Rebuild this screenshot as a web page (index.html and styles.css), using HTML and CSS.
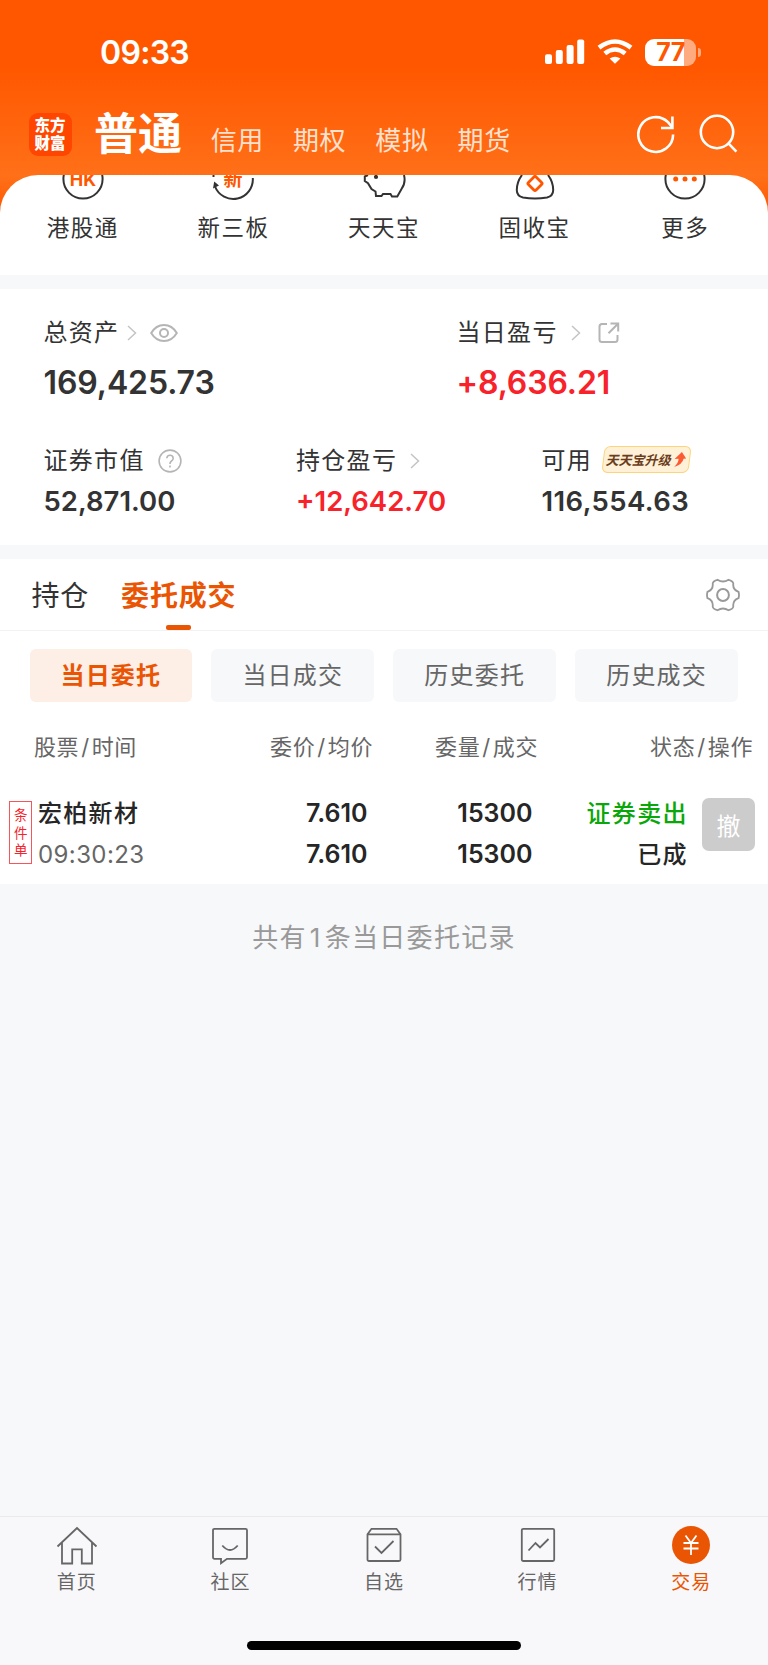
FILE: index.html
```html
<!DOCTYPE html>
<html lang="zh-CN">
<head>
  <meta charset="UTF-8">
  <meta name="viewport" content="width=device-width, initial-scale=1.0">
  <title>交易</title>
  <link rel="stylesheet" href="styles.css">
</head>
<body>
<header class="header">
  <div class="status-bar">
    <span class="time">09:33</span>
    <div class="status-icons">
      <svg class="signal" width="40" height="26" viewBox="0 0 40 26" fill="#fff">
        <rect x="0" y="15.3" width="7" height="9.7" rx="2"/>
        <rect x="10.8" y="11" width="7" height="14" rx="2"/>
        <rect x="21.6" y="6" width="7" height="19" rx="2"/>
        <rect x="32.2" y="0.5" width="7" height="24.5" rx="2"/>
      </svg>
      <svg class="wifi" width="36" height="26" viewBox="0 0 36 26" fill="none" stroke="#fff" stroke-width="4.6">
        <path d="M2 8.6Q18 -3.6 34 8.6"/>
        <path d="M7.8 14.5Q18 6.5 28.2 14.5"/>
        <path d="M18 24.8l-5.4-5.3q5.4-3.6 10.8 0z" fill="#fff" stroke="none"/>
      </svg>
      <div class="battery"><span class="battery-text">77</span></div>
      <i class="battery-tip"></i>
    </div>
  </div>
  <div class="nav-bar">
    <div class="logo">东方财富</div>
    <nav class="account-tabs">
      <a class="current">普通</a>
      <a>信用</a>
      <a>期权</a>
      <a>模拟</a>
      <a>期货</a>
    </nav>
    <div class="nav-actions">
      <svg width="40" height="42" viewBox="0 0 40 42" fill="none" stroke="#fff" stroke-width="2.6">
        <path d="M36.1 21.5A17.4 17.4 0 1 1 31 9.2L35 14"/>
        <path d="M35.4 3.5V15H24"/>
      </svg>
      <svg width="40" height="42" viewBox="0 0 40 42" fill="none" stroke="#fff" stroke-width="2.6">
        <circle cx="18" cy="19" r="16.2"/>
        <path d="M29.2 30.2l8.2 8.4"/>
      </svg>
    </div>
  </div>
</header>

<section class="shortcuts">
  <div class="shortcut">
    <svg width="44" height="26" viewBox="0 0 44 26">
      <circle cx="22" cy="4" r="19.6" fill="none" stroke="#333" stroke-width="2"/>
      <text x="22" y="10.5" class="icon-text icon-hk">HK</text>
    </svg>
    <span>港股通</span>
  </div>
  <div class="shortcut">
    <svg width="44" height="26" viewBox="0 0 44 26">
      <path d="M41.8 3A19.6 19.6 0 0 1 4 11.5M2.5 0v2" fill="none" stroke="#333" stroke-width="2"/>
      <path d="M2 13.5l1.2-7 4.8 4z" fill="#333"/>
      <text x="22" y="10.5" class="icon-text icon-new">新</text>
    </svg>
    <span>新三板</span>
  </div>
  <div class="shortcut">
    <svg width="44" height="26" viewBox="0 0 44 26" fill="none" stroke="#333" stroke-width="2">
      <path d="M6 0L2.8 1.5V6L6 8.2 9.5 14l4 2.5.5 4.5h5.5l1.5-2h7.5l1.5 2.5h5.3l4.2-7.5q4.5-6 2.5-14"/>
      <circle cx="14" cy="2" r="2.1" fill="#333" stroke="none"/>
    </svg>
    <span>天天宝</span>
  </div>
  <div class="shortcut">
    <svg width="44" height="26" viewBox="0 0 44 26" fill="none" stroke="#333" stroke-width="2">
      <path d="M9 0Q3.800 7 3.800 15Q3.800 21 10 22.500Q22 24.500 34 22.500Q40.200 21 40.200 15Q40.200 7 35 0"/>
      <rect x="16.6" y="3.1" width="10.8" height="10.8" rx="1.5" stroke="#ff5700" stroke-width="2.8" transform="rotate(45 22 8.5)"/>
    </svg>
    <span>固收宝</span>
  </div>
  <div class="shortcut">
    <svg width="44" height="26" viewBox="0 0 44 26">
      <circle cx="22" cy="4" r="19.6" fill="none" stroke="#333" stroke-width="2"/>
      <g fill="#ff5700"><circle cx="12.7" cy="4" r="2.5"/><circle cx="22" cy="4" r="2.5"/><circle cx="31.3" cy="4" r="2.5"/></g>
    </svg>
    <span>更多</span>
  </div>
</section>

<section class="assets">
  <div class="asset-row main-row">
    <div class="asset">
      <div class="asset-label">总资产
        <svg class="arrow" width="10" height="16" viewBox="0 0 10 16"><path d="M1 1l7.5 7L1 15"/></svg>
        <svg class="eye" width="28" height="20" viewBox="0 0 28 20"><path d="M1.200 10Q6 2 14 2t12.800 8Q22 18 14 18T1.200 10z"/><circle cx="14" cy="10" r="4"/></svg>
      </div>
      <div class="asset-value">169,425.73</div>
    </div>
    <div class="asset">
      <div class="asset-label">当日盈亏
        <svg class="arrow day" width="10" height="16" viewBox="0 0 10 16"><path d="M1 1l7.5 7L1 15"/></svg>
        <svg class="share" width="22" height="22" viewBox="0 0 22 22"><path d="M9 2H4Q1.500 2 1.500 4.500V17.500Q1.500 20 4 20H17Q19.500 20 19.500 17.500V13M12.500 1.500H20.200V9.500M20 1.700L10.500 11.200"/></svg>
      </div>
      <div class="asset-value up">+8,636.21</div>
    </div>
  </div>
  <div class="asset-row sub-row">
    <div class="asset">
      <div class="asset-label">证券市值
        <svg class="help" width="24" height="24" viewBox="0 0 24 24"><circle cx="12" cy="12" r="10.9"/><path d="M8.800 9.300Q9 6.200 12 6.200T15.200 9.200Q15.200 10.800 13.500 12T12 15M12 16.500v2"/></svg>
      </div>
      <div class="asset-value">52,871.00</div>
    </div>
    <div class="asset">
      <div class="asset-label">持仓盈亏
        <svg class="arrow day" width="10" height="16" viewBox="0 0 10 16"><path d="M1 1l7.5 7L1 15"/></svg>
      </div>
      <div class="asset-value up">+12,642.70</div>
    </div>
    <div class="asset">
      <div class="asset-label">可用
        <span class="upgrade"><b>天天宝升级</b>
          <svg width="12" height="15" viewBox="0 0 12 15"><path d="M7 0l5 6.500-2.500.3Q9 12.500 1 15q4-4 3.500-8.200L0.500 7z" fill="#fb5a33"/></svg>
        </span>
      </div>
      <div class="asset-value available">116,554.63</div>
    </div>
  </div>
</section>

<section class="orders">
  <div class="tabs">
    <a class="tab">持仓</a>
    <a class="tab active">委托成交</a>
    <svg class="settings" width="34" height="34" viewBox="0 0 34 34" fill="none" stroke="#999" stroke-width="1.8">
      <path d="M11.500 1.800Q17 5.200 22.500 1.800Q27 3 27.300 5.500Q26.500 11.500 32.500 13.800Q33.500 17 32.500 20.200Q26.500 22.500 27.300 28.500Q27 31 22.500 32.200Q17 28.800 11.500 32.200Q7 31 6.700 28.500Q7.500 22.500 1.500 20.200Q.5 17 1.500 13.800Q7.500 11.500 6.700 5.500Q7 3 11.500 1.800z"/>
      <circle cx="17" cy="17" r="5.9" stroke-width="2"/>
    </svg>
  </div>
  <div class="filters">
    <a class="filter selected">当日委托</a>
    <a class="filter">当日成交</a>
    <a class="filter">历史委托</a>
    <a class="filter">历史成交</a>
  </div>
  <div class="grid table-head">
    <span>股票<i>/</i>时间</span>
    <span>委价<i>/</i>均价</span>
    <span>委量<i>/</i>成交</span>
    <span>状态<i>/</i>操作</span>
  </div>
  <div class="order">
    <span class="tag">条件单</span>
    <div class="stock">
      <strong>宏柏新材</strong>
      <span class="order-time">09:30:23</span>
    </div>
    <div class="cell"><span>7.610</span><span>7.610</span></div>
    <div class="cell"><span>15300</span><span>15300</span></div>
    <div class="cell state"><span class="sell">证券卖出</span><span>已成</span></div>
    <button class="cancel">撤</button>
  </div>
</section>

<main class="record-area">共有<i>1</i>条当日委托记录</main>

<footer class="tab-bar">
  <div class="tab-items">
    <a class="tab-item">
      <svg width="42" height="40" viewBox="0 0 42 40"><path d="M1.500 20.500L21 2l19.500 18.500M6 17v20.500h10.200V23.300h9.600v14.200H36V17"/></svg>
      <span>首页</span>
    </a>
    <a class="tab-item">
      <svg width="42" height="40" viewBox="0 0 42 40"><path d="M5.500 2.800h31q1.500 0 1.500 1.500v27q0 1.500-1.500 1.500H18l-6 4.500v-4.500H5.500Q4 32.800 4 31.300v-27q0-1.500 1.500-1.500zM13.300 19.500q7.700 9 15.400 0"/></svg>
      <span>社区</span>
    </a>
    <a class="tab-item">
      <svg width="42" height="40" viewBox="0 0 42 40"><path d="M4.500 8.300L8.500 2.800H33.500L37.500 8.300V33.500Q37.500 35 36 35H6Q4.500 35 4.500 33.500zM4.500 8.300H37.500M12 20.500l6.500 6.500L30.500 15"/></svg>
      <span>自选</span>
    </a>
    <a class="tab-item">
      <svg width="42" height="40" viewBox="0 0 42 40"><rect x="4.8" y="2.8" width="32.4" height="32.2" rx="1.5"/><path d="M11.500 24.500l7-7.500 4.500 4.500 8.500-8.500"/></svg>
      <span>行情</span>
    </a>
    <a class="tab-item on">
      <svg width="42" height="40" viewBox="0 0 42 40"><circle cx="21" cy="19" r="19" class="disc"/><path d="M15.500 9.500l5.500 7.500 5.500-7.500M13.500 17h15M13.500 22.500h15M21 17v12" class="yen"/></svg>
      <span>交易</span>
    </a>
  </div>
  <div class="home-indicator"></div>
</footer>
</body>
</html>
```
FILE: styles.css
```css
* {
  box-sizing: border-box;
}
body {
  margin: 0;
  width: 768px;
  height: 1665px;
  overflow: hidden;
  display: flex;
  flex-direction: column;
  font-family: Inter, "Noto Sans CJK SC", sans-serif;
  color: #333;
  background: #f7f8fa;
}
svg {
  display: block;
  flex: none;
}
i {
  font-style: normal;
}

/* header */
.header {
  height: 214px;
  flex: none;
  background: linear-gradient(#ff5700 0, #ff5700 66px, #ff7018 176px, #ff5700 214px);
}
.status-bar {
  height: 104px;
  padding: 0 67px 0 100px;
  display: flex;
  align-items: center;
  justify-content: space-between;
}
.time {
  font-size: 32px;
  font-weight: 600;
  color: #fff;
  letter-spacing: -0.7px;
}
.status-icons {
  display: flex;
  align-items: center;
}
.signal {
  margin-right: 12px;
}
.wifi {
  margin-right: 12px;
}
.battery {
  width: 51px;
  height: 27px;
  border-radius: 9px;
  background: linear-gradient(90deg, #fff 39px, #ffab80 39px);
  text-align: center;
}
.battery-text {
  font-size: 25px;
  line-height: 27px;
  font-weight: 700;
  color: #ff5700;
  letter-spacing: -0.5px;
}
.battery-tip {
  width: 3px;
  height: 9px;
  margin-left: 2px;
  border-radius: 0 4px 4px 0;
  background: #ffab80;
}
.nav-bar {
  height: 71px;
  padding: 0 29px;
  display: flex;
}
.logo {
  width: 43px;
  height: 43px;
  margin-top: 9px;
  padding: 3px 6px 0 5.5px;
  border-radius: 9px;
  background: #ff4600;
  color: #fff;
  font: 900 15.5px/17.5px "Noto Sans CJK SC", sans-serif;
}
.account-tabs {
  margin-left: 22px;
  display: flex;
  align-items: baseline;
  line-height: 61px;
  font-size: 26px;
  color: #ffe1d0;
}
.account-tabs a {
  width: 82.3px;
  letter-spacing: 0.6px;
}
.account-tabs .current {
  width: 116.7px;
  font-size: 44px;
  font-weight: 700;
  color: #fff;
  letter-spacing: 0;
}
.nav-actions {
  margin: 9px 0 0 auto;
  display: flex;
  gap: 22px;
}

/* shortcuts */
.shortcuts {
  height: 100px;
  flex: none;
  margin-top: -39px;
  padding: 0 7.5px;
  display: flex;
  background: #fff;
  border-radius: 38px 38px 0 0;
}
.shortcut {
  flex: 1;
  display: flex;
  flex-direction: column;
  align-items: center;
  font-size: 22.5px;
  line-height: 30px;
}
.shortcut span {
  margin-top: 12px;
  letter-spacing: 1.5px;
}
.icon-text {
  fill: #ff5700;
  text-anchor: middle;
  font-weight: 700;
}
.icon-hk {
  font-size: 18px;
}
.icon-new {
  font-size: 19px;
}

/* assets */
.assets {
  height: 256px;
  flex: none;
  margin-top: 14px;
  padding: 28px 0 0 43.5px;
  background: #fff;
}
.asset-row {
  display: grid;
}
.main-row {
  grid-template-columns: 413px 1fr;
  height: 128px;
}
.sub-row {
  grid-template-columns: 252.5px 245.5px 1fr;
}
.asset-label {
  display: flex;
  align-items: center;
  height: 30px;
  line-height: 30px;
  padding-top: 2px;
  font-size: 24px;
  letter-spacing: 1.3px;
}
.asset-label svg {
  fill: none;
  stroke: #b5b5b5;
  stroke-width: 2;
}
.asset-label .arrow {
  margin-left: 8px;
  stroke: #c4c4c4;
  stroke-width: 1.5;
}
.asset-label .arrow.day {
  margin-left: 13px;
}
.asset-label .eye {
  margin-left: 13px;
}
.asset-label .share {
  margin-left: 17px;
}
.asset-label .help {
  margin-left: 13px;
  stroke-width: 1.6;
}
.asset-value {
  font-weight: 600;
}
.main-row .asset-value {
  margin-top: 18px;
  font-size: 32px;
  line-height: 36px;
  letter-spacing: -0.1px;
}
.sub-row .asset-value {
  margin-top: 10px;
  font-size: 27.5px;
  line-height: 32px;
}
.sub-row .available {
  letter-spacing: 0.4px;
}
.up {
  color: #f8222a;
}
.upgrade {
  width: 87px;
  height: 27px;
  margin: -3px 0 0 11px;
  display: flex;
  flex: none;
  align-items: center;
  justify-content: center;
  gap: 2px;
  transform: skewX(-7deg);
  border: 1.5px solid #fcd47c;
  border-radius: 6px;
  background: #fff1d8;
  color: #6b3d1c;
  font-size: 13px;
  letter-spacing: 0;
}
.upgrade b {
  transform: skewX(-8deg);
}
.asset-label .upgrade svg {
  stroke: none;
}

/* orders */
.orders {
  height: 325px;
  flex: none;
  margin-top: 14px;
  background: #fff;
}
.tabs {
  height: 72px;
  padding: 0 28px 0 31.5px;
  display: flex;
  border-bottom: 1px solid #f1f2f4;
}
.tab {
  position: relative;
  margin-right: 32px;
  font-size: 28px;
  line-height: 74px;
  letter-spacing: 0.8px;
}
.tab.active {
  font-weight: 700;
  color: #ea5504;
}
.tab.active::after {
  content: "";
  position: absolute;
  left: 45px;
  bottom: 0;
  width: 25px;
  height: 5px;
  border-radius: 2px;
  background: #ea5504;
}
.settings {
  margin: 19px 0 0 auto;
}
.filters {
  padding: 18px 30px 0 29.5px;
  display: grid;
  grid-template-columns: repeat(4, 1fr);
  gap: 19.2px;
}
.filter {
  height: 53px;
  border-radius: 6px;
  background: #f7f8fa;
  color: #666;
  font-size: 24px;
  line-height: 54px;
  letter-spacing: 1.2px;
  text-align: center;
}
.filter.selected {
  background: #fdeee6;
  color: #ea5504;
  font-weight: 700;
}
.grid {
  display: grid;
  grid-template-columns: 173px 166px 165px 1fr;
}
.table-head {
  margin: 25px 15px 0 34px;
  color: #666;
  font-size: 22px;
  line-height: 40px;
}
.table-head span {
  letter-spacing: 0.6px;
}
.table-head span + span {
  text-align: right;
}
.table-head i {
  margin: 0 2px;
}
.order {
  height: 115px;
  padding: 31px 0 0 9px;
  display: flex;
}
.tag {
  width: 23px;
  height: 63px;
  margin: 3px 6px 0 0;
  padding: 4px 4px;
  border: 1px solid #f8555a;
  color: #f8222a;
  font: 13.5px/17.5px "Noto Sans CJK SC", sans-serif;
}
.stock {
  width: 161px;
  display: flex;
  flex-direction: column;
  font-size: 24px;
  line-height: 41px;
}
.stock strong {
  font-weight: 500;
  letter-spacing: 1.3px;
  color: #262626;
}
.order-time {
  color: #666;
  letter-spacing: 0.4px;
}
.stock, .cell {
  margin-top: -5px;
}
.cell {
  width: 168.5px;
  display: flex;
  flex-direction: column;
  text-align: right;
  font-size: 25px;
  line-height: 41px;
  font-weight: 600;
  color: #262626;
}
.cell + .cell {
  width: 165px;
}
.cell.state {
  width: 155.5px;
  font-size: 24px;
  font-weight: 500;
  letter-spacing: 1.4px;
}
.sell {
  color: #09a709;
}
.cancel {
  width: 53px;
  height: 53px;
  margin-left: 14px;
  padding: 0;
  border: none;
  border-radius: 7px;
  background: #ccc;
  color: #fff;
  font: 24px/52px "Noto Sans CJK SC", sans-serif;
}

/* records */
.record-area {
  flex: 1;
  padding-top: 34px;
  text-align: center;
  color: #999;
  font-size: 26px;
  line-height: 40px;
  letter-spacing: 1.3px;
}
.record-area i {
  margin: 0 3px;
}

/* bottom bar */
.tab-bar {
  height: 149px;
  flex: none;
  border-top: 1px solid #e9eaec;
  background: #f8f8fb;
}
.tab-items {
  height: 124px;
  padding-top: 9px;
  display: flex;
}
.tab-item {
  flex: 1;
  display: flex;
  flex-direction: column;
  align-items: center;
  color: #666;
  font-size: 19px;
  line-height: 28px;
}
.tab-item span {
  margin-top: 3px;
  letter-spacing: 1px;
}
.tab-item svg {
  fill: none;
  stroke: #666;
  stroke-width: 1.8;
}
.tab-item.on {
  color: #ea5504;
}
.tab-item .disc {
  fill: #ea5504;
  stroke: none;
}
.tab-item .yen {
  stroke: #fff;
}
.home-indicator {
  width: 274px;
  height: 9px;
  margin: 0 auto;
  border-radius: 5px;
  background: #000;
}
```
